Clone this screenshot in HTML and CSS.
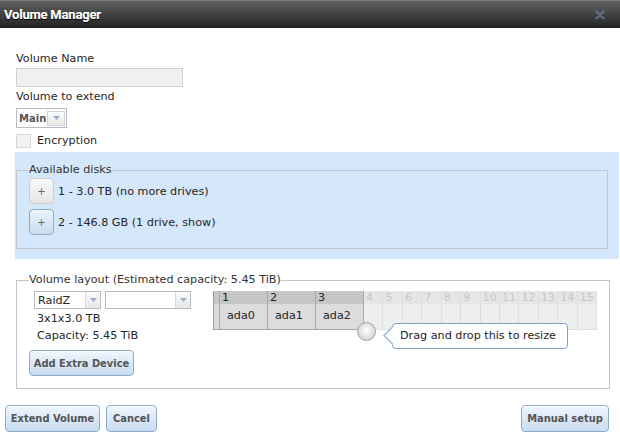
FILE: index.html
```html
<!DOCTYPE html>
<html>
<head>
<meta charset="utf-8">
<link rel="stylesheet" href="styles.css">
</head>
<body>
<div class="dialog">
  <div class="titlebar">
    <span class="title">Volume Manager</span>
    <svg class="close" width="10" height="10" viewBox="0 0 10 10"><path d="M1.5 1.5 L8.5 8.5 M8.5 1.5 L1.5 8.5" stroke="#6a7b93" stroke-width="2.4" stroke-linecap="round"/></svg>
  </div>
  <div class="top">
    <div class="label">Volume Name</div>
    <div class="input"></div>
    <div class="label l2">Volume to extend</div>
    <div class="select main-sel"><span class="val">Main</span><span class="arrow"><svg width="7" height="4" viewBox="0 0 7 4"><path d="M0 0 H7 L3.5 4 Z" fill="#9aaccb"/></svg></span></div>
    <div class="check"><span class="box"></span><span>Encryption</span></div>
  </div>
  <div class="disks-panel">
    <fieldset class="fs disks">
      <legend>Available disks</legend>
      <div class="disk-row"><span class="plus">+</span><span>1 - 3.0 TB (no more drives)</span></div>
      <div class="disk-row"><span class="plus blue">+</span><span>2 - 146.8 GB (1 drive, show)</span></div>
    </fieldset>
  </div>
  <fieldset class="fs layout">
    <legend>Volume layout (Estimated capacity: 5.45 TiB)</legend>
    <div class="layout-inner">
      <div class="left">
        <div class="sel-row">
          <div class="select raid"><span class="val">RaidZ</span><span class="arrow"><svg width="7" height="4" viewBox="0 0 7 4"><path d="M0 0 H7 L3.5 4 Z" fill="#9aaccb"/></svg></span></div>
          <div class="select blank"><span class="val"></span><span class="arrow"><svg width="7" height="4" viewBox="0 0 7 4"><path d="M0 0 H7 L3.5 4 Z" fill="#9aaccb"/></svg></span></div>
        </div>
        <div class="info">3x1x3.0 TB</div>
        <div class="info">Capacity: 5.45 TiB</div>
        <button class="btn add">Add Extra Device</button>
      </div>
      <div class="grid-wrap">
        <div class="grid">
          <div class="col c0"><div class="h"></div><div class="b"></div></div>
          <div class="col used"><div class="h">1</div><div class="b">ada0</div></div>
          <div class="col used"><div class="h">2</div><div class="b">ada1</div></div>
          <div class="col used"><div class="h">3</div><div class="b">ada2</div></div>
          <div class="col free"><div class="h">4</div><div class="b"></div></div>
          <div class="col free"><div class="h">5</div><div class="b"></div></div>
          <div class="col free"><div class="h">6</div><div class="b"></div></div>
          <div class="col free"><div class="h">7</div><div class="b"></div></div>
          <div class="col free"><div class="h">8</div><div class="b"></div></div>
          <div class="col free"><div class="h">9</div><div class="b"></div></div>
          <div class="col free"><div class="h">10</div><div class="b"></div></div>
          <div class="col free"><div class="h">11</div><div class="b"></div></div>
          <div class="col free"><div class="h">12</div><div class="b"></div></div>
          <div class="col free"><div class="h">13</div><div class="b"></div></div>
          <div class="col free"><div class="h">14</div><div class="b"></div></div>
          <div class="col free"><div class="h">15</div><div class="b"></div></div>
        </div>
        <div class="handle"></div>
        <div class="tip">Drag and drop this to resize</div>
      </div>
    </div>
  </fieldset>
  <div class="actions">
    <button class="btn">Extend Volume</button>
    <button class="btn">Cancel</button>
    <span class="spacer"></span>
    <button class="btn">Manual setup</button>
  </div>
</div>
</body>
</html>
```

FILE: styles.css
```css
html, body {
  margin: 0;
  padding: 0;
  background: #fff;
}
body {
  font-family: "DejaVu Sans", Verdana, sans-serif;
  font-size: 11.2px;
  color: #262626;
  width: 620px;
  height: 440px;
  overflow: hidden;
}
.titlebar {
  height: 28px;
  box-sizing: border-box;
  border-top: 1px solid #7a7a7a;
  background: linear-gradient(#606060, #2c2c2c 85%, #1c1c1c);
  display: flex;
  align-items: center;
  padding: 0 4px;
}
.title {
  flex: 1;
  color: #fff;
  font-family: Roboto, "DejaVu Sans Condensed", sans-serif;
  font-weight: bold;
  font-size: 13px;
  letter-spacing: -0.2px;
  text-shadow: 0 1px 1px #000, 0 0 0.4px #fff;
}
.close {
  margin-right: 11px;
  opacity: 0.8;
}
.top {
  padding: 24px 0 0 16px;
  display: flex;
  flex-direction: column;
  align-items: flex-start;
}
.label {
  line-height: 14px;
}
.l2 {
  margin-top: 3px;
}
.input {
  margin-top: 2px;
  width: 167px;
  height: 19px;
  box-sizing: border-box;
  border: 1px solid #d0d0d0;
  background: #f0f0f0;
}
.select {
  display: flex;
  align-items: center;
  box-sizing: border-box;
  border: 1px solid #b8bcc6;
  background: #fff;
}
.select .val {
  flex: 1;
  padding-left: 3px;
}
.select .arrow {
  box-sizing: border-box;
  border: 1px solid #cfd3da;
  background: linear-gradient(#fbfbfb, #e8e8e8);
  display: flex;
  align-items: center;
  justify-content: center;
}
.main-sel {
  margin-top: 4px;
  width: 51px;
  height: 20px;
}
.main-sel .val {
  font-weight: bold;
  color: #555;
  font-size: 10px;
  padding-left: 2px;
}
.main-sel .arrow {
  width: 18px;
  height: 15px;
  margin-right: 1px;
}
.check {
  margin-top: 6px;
  display: flex;
  align-items: center;
  line-height: 14px;
}
.check .box {
  width: 15px;
  height: 14px;
  box-sizing: border-box;
  border: 1px solid #d8d8d8;
  background: #f2f2f2;
  margin-right: 6px;
}
.disks-panel {
  margin: 4px 1px 0 15px;
  background: #d5e7fb;
  padding: 11px 11px 10px 1px;
}
.fs {
  margin: 0;
  border: 1px solid #c2c6cc;
  padding: 0 12px;
  min-width: 0;
}
.fs legend {
  padding: 0;
  line-height: 14px;
  color: #333;
}
.disks {
  padding-bottom: 13px;
}
.disk-row {
  display: flex;
  align-items: center;
  margin-top: 1px;
}
.disk-row + .disk-row {
  margin-top: 5px;
}
.plus {
  width: 25px;
  height: 26px;
  box-sizing: border-box;
  border: 1px solid #cfcfcf;
  border-radius: 4px;
  background: linear-gradient(#f8f8f8, #e6e6e6);
  color: #666;
  font-size: 10px;
  display: flex;
  align-items: center;
  justify-content: center;
  margin-right: 4px;
}
.plus.blue {
  border-color: #8eaacb;
  background: linear-gradient(#edf4fc, #c9dcf2);
}
.layout {
  margin: 14px 10px 0 16px;
  padding-bottom: 12px;
}
.layout-inner {
  display: flex;
  align-items: flex-start;
  margin-top: 4px;
}
.left {
  width: 184px;
  display: flex;
  flex-direction: column;
  align-items: flex-start;
}
.sel-row {
  display: flex;
  gap: 4px;
  margin-left: 5px;
}
.raid {
  width: 67px;
  height: 18px;
}
.raid .val {
  padding-left: 3px;
}
.raid .arrow, .blank .arrow {
  width: 15px;
  height: 16px;
  border: none;
  border-left: 1px solid #d6d9de;
}
.blank {
  width: 86px;
  height: 18px;
}
.info {
  margin-left: 8px;
  line-height: 14px;
  margin-top: 3px;
}
.info + .info {
  margin-top: 3px;
}
.btn {
  font-family: "DejaVu Sans Condensed", "DejaVu Sans", sans-serif;
  font-weight: bold;
  font-size: 11px;
  color: #545454;
  height: 27px;
  box-sizing: border-box;
  border: 1px solid #8fabcc;
  border-radius: 4px;
  background: linear-gradient(#f0f6fd, #c8dcf2);
  box-shadow: inset 0 1px 0 #fff;
  padding: 0 8px;
  margin: 0;
}
.add {
  margin-top: 7px;
  width: 105px;
  height: 26px;
  padding: 0;
}
.grid-wrap {
  position: relative;
  width: 384px;
}
.grid {
  display: flex;
  border-left: 1px solid #9a9a9a;
}
.col {
  display: flex;
  flex-direction: column;
  box-sizing: border-box;
}
.col .h {
  height: 13px;
  line-height: 13px;
  padding-left: 2px;
}
.col .b {
  height: 26px;
  line-height: 24px;
  padding-left: 7px;
  box-sizing: border-box;
}
.c0 {
  width: 6px;
  border-right: 1px solid #a8a8a8;
}
.c0 .h, .used .h {
  background: #c6c6c6;
}
.c0 .b, .used .b {
  background: #dcdcdc;
  border-bottom: 1px solid #a8a8a8;
}
.c0 .h, .c0 .b {
  padding: 0;
}
.used {
  width: 48px;
  border-right: 1px solid #a8a8a8;
}
.used .h {
  color: #222;
}
.free {
  flex: 1;
  border-right: 1px solid #dedede;
}
.free .h {
  background: #e6e6e6;
  color: #c6c6c6;
}
.free .b {
  background: #eeeeee;
  border-bottom: 1px solid #e0e0e0;
}
.handle {
  position: absolute;
  left: 144px;
  top: 31px;
  width: 19px;
  height: 19px;
  box-sizing: border-box;
  border-radius: 50%;
  border: 1px solid #a4a4a4;
  background: radial-gradient(circle at 50% 45%, #ffffff 0, #ececec 35%, #c4c4c4 100%);
}
.tip {
  position: absolute;
  left: 179px;
  top: 32px;
  width: 176px;
  height: 26px;
  box-sizing: border-box;
  border: 1px solid #7fa2c8;
  border-radius: 4px;
  background: #fff;
  line-height: 24px;
  padding-left: 7px;
  color: #222;
}
.tip::before {
  content: "";
  position: absolute;
  left: -7px;
  top: 5px;
  width: 12px;
  height: 12px;
  background: #fff;
  border-left: 1px solid #7fa2c8;
  border-bottom: 1px solid #7fa2c8;
  transform: rotate(45deg);
}
.actions {
  display: flex;
  gap: 6px;
  margin: 16px 11px 0 5px;
}
.actions .btn:nth-child(1) {
  width: 95px;
  padding: 0;
}
.actions .btn:nth-child(2) {
  width: 51px;
  padding: 0;
}
.actions .btn:nth-child(4) {
  width: 88px;
  padding: 0;
}
.spacer {
  flex: 1;
}
```
